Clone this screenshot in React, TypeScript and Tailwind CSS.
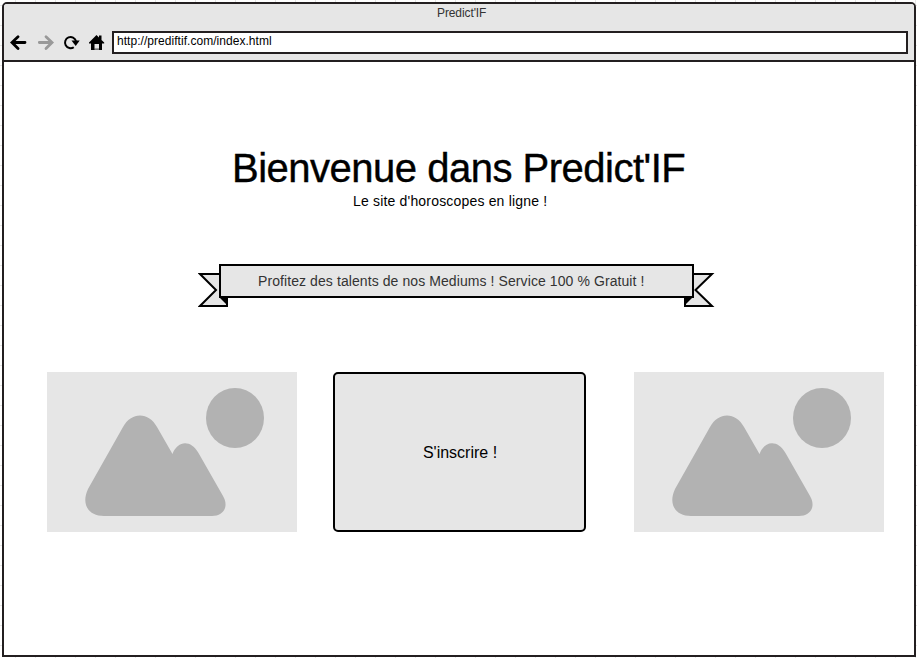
import React from "react";

function PicturePlaceholder() {
  return (
    <svg width="250" height="160" viewBox="0 0 250 160" className="block shrink-0 bg-[#e6e6e6]" fill="#b2b2b2">
      <ellipse cx="188" cy="46" rx="29" ry="30" />
      <path d="M76 55C84 39.500 102 39.500 110 55L125.500 82C131 68 144 68 151.500 81L176 124C182 134 177 144 165 144H57C41 144 34 132 41 117Z" />
    </svg>
  );
}

function Toolbar() {
  return (
    <div className="flex h-[23px] items-center px-[6px]">
      <svg width="18" height="17" viewBox="0 0 18 17" className="mr-[9px] block shrink-0" fill="none" stroke="#000" strokeWidth="2.8" strokeLinecap="round">
        <path d="M15 8.500H3M8 2.800L2 8.500L8 14.400" />
      </svg>
      <svg width="18" height="17" viewBox="0 0 18 17" className="mr-[8px] block shrink-0" fill="none" stroke="#999" strokeWidth="2.8" strokeLinecap="round">
        <path d="M2.300 8.500H14M9 2.800L15 8.500L9 14.400" />
      </svg>
      <svg width="18" height="17" viewBox="0 0 18 17" className="mr-[7px] block shrink-0" fill="none" stroke="#000" strokeWidth="2">
        <path d="M10.800 13.200A5.600 5.600 0 1 1 13 7" />
        <path d="M8.500 6.500H16.700L12.700 12Z" fill="#000" stroke="none" />
      </svg>
      <svg width="17" height="17" viewBox="0 0 17 17" className="mr-[7px] block shrink-0">
        <path d="M8.500 1L11 3.500V1.500H13.500V6L16.200 8.600V9.500H14V16H3V9.500H1V8.600Z" fill="#000" />
        <path d="M6.500 10H11V14.800H6.500Z" fill="#e6e6e6" />
        <path d="M6.500 14.800H11V16H6.500Z" fill="#777" />
      </svg>
      <div className="flex h-[23px] flex-1 items-start border-2 border-[#231f20] bg-white pl-[3px]">
        <span className="whitespace-nowrap text-[12px] leading-[16px] tracking-[0.04px] text-black">http://prediftif.com/index.html</span>
      </div>
    </div>
  );
}

function Ribbon() {
  return (
    <div className="relative ml-[194px] h-[43px] w-[518px]">
      <svg width="518" height="43" viewBox="0 0 518 43" className="absolute left-0 top-0" fill="#e6e6e6" stroke="#000" strokeWidth="2">
        <path d="M22 10H2L18 26L2 42H29V33H22Z" />
        <path d="M21 33H30V42Z" fill="#000" stroke="none" />
        <path d="M495 10H514L497.500 26L514 42H487V33H495Z" />
        <path d="M495 33H486V42Z" fill="#000" stroke="none" />
      </svg>
      <div className="relative ml-[21px] flex h-[34px] w-[475px] items-center border-2 border-black bg-[#e6e6e6] pl-[37px]">
        <span className="whitespace-nowrap text-[14px] leading-[16px] tracking-[0.085px] text-[#333]">
          Profitez des talents de nos Mediums ! Service 100 % Gratuit !
        </span>
      </div>
    </div>
  );
}

export default function App() {
  return (
    <div className="h-[658px] w-[917px] overflow-hidden bg-white bg-[linear-gradient(90deg,#e5e5e5_1px,transparent_1px),linear-gradient(#e5e5e5_1px,transparent_1px)] bg-[length:20px_20px] bg-[position:15px_5px] pl-[2px] pt-[2px] font-['Liberation_Sans',Arial,sans-serif]">
      <div className="h-[655px] w-[914px] overflow-hidden rounded-t-[5px] border-2 border-[#231f20] bg-white">
        <header className="h-[58px] border-b-2 border-[#231f20] bg-[#e6e6e6]">
          <div className="h-[27px] pl-[433px] pt-[1px]">
            <span className="block whitespace-nowrap text-[12px] leading-[16px] tracking-[-0.1px] text-[#333]">Predict'IF</span>
          </div>
          <Toolbar />
        </header>
        <main className="flex flex-col pt-[83px]">
          <h1 className="whitespace-nowrap pl-[228px] text-[40px] leading-[46px] tracking-[-0.5px] text-black [-webkit-text-stroke:0.4px_black]">
            Bienvenue dans Predict'IF
          </h1>
          <p className="whitespace-nowrap pl-[349px] text-[14px] leading-[20px] tracking-[0.18px] text-black">Le site d'horoscopes en ligne !</p>
          <div className="pt-[53px]">
            <Ribbon />
          </div>
          <div className="flex pl-[43px] pt-[65px]">
            <PicturePlaceholder />
            <button className="ml-[36px] mr-[48px] flex h-[160px] w-[253px] shrink-0 items-center justify-center rounded-[5px] border-2 border-black bg-[#e6e6e6] pl-[1px] pt-[2px] text-[16px] text-black">
              S'inscrire !
            </button>
            <PicturePlaceholder />
          </div>
        </main>
      </div>
    </div>
  );
}
